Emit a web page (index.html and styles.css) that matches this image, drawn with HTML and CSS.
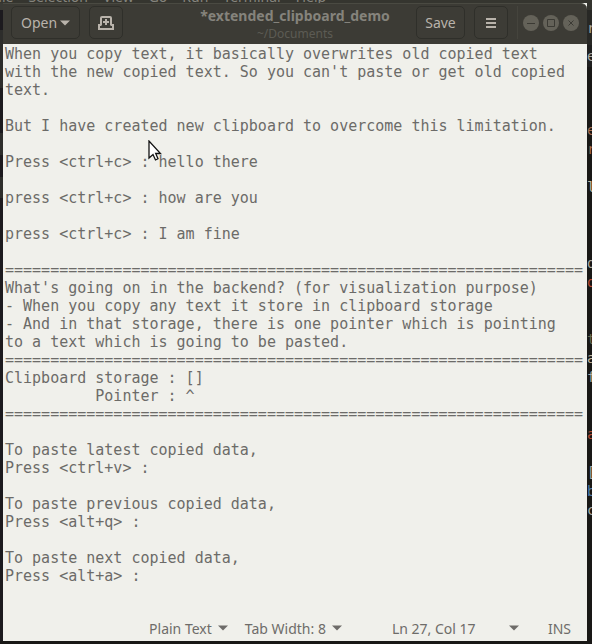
FILE: index.html
```html
<!DOCTYPE html>
<html lang="en">
<head>
<meta charset="utf-8">
<meta name="viewport" content="width=device-width, initial-scale=1">
<title>*extended_clipboard_demo</title>
<link rel="stylesheet" href="styles.css">
</head>
<body>
<div class="desktop">
  <div class="menu-strip">
    <div class="menu-items"><span>File</span><span>Selection</span><span>View</span><span>Go</span><span>Run</span><span>Terminal</span><span>Help</span></div>
  </div>
  <div class="left-strip"></div>
  <main class="window">
    <header class="titlebar">
      <div class="tools">
        <button class="btn open" type="button">Open
          <svg width="10" height="6" viewBox="0 0 10 6" aria-hidden="true"><path d="M0 0.5h10L5 5.5z" fill="currentColor"/></svg>
        </button>
        <button class="btn square" type="button" aria-label="New document">
          <svg width="16" height="14" viewBox="0 0 16 14" aria-hidden="true"><path d="M3 9V2Q3 1 4 1H12Q13 1 13 2V9M3.500 9H1V13H15V9H12.500M8 3V9M5 6H11" fill="none" stroke="currentColor" stroke-width="2"/></svg>
        </button>
      </div>
      <div class="heading">
        <h1>*extended_clipboard_demo</h1>
        <p>~/Documents</p>
      </div>
      <div class="tools tools-end">
        <button class="btn save" type="button">Save</button>
        <button class="btn square" type="button" aria-label="Menu">
          <svg width="10" height="10" viewBox="0 0 10 10" aria-hidden="true"><path d="M0 1h10M0 5h10M0 9h10" stroke="currentColor" stroke-width="2"/></svg>
        </button>
        <div class="controls">
          <button class="round" type="button" aria-label="Minimize"><svg width="16" height="16" viewBox="0 0 16 16"><path d="M4 8.500h8"/></svg></button>
          <button class="round" type="button" aria-label="Maximize"><svg width="16" height="16" viewBox="0 0 16 16"><path d="M4.500 4.500h7v7h-7z"/></svg></button>
          <button class="round" type="button" aria-label="Close"><svg width="16" height="16" viewBox="0 0 16 16"><path d="M5.500 5.500l5 5M10.500 5.500l-5 5"/></svg></button>
        </div>
      </div>
    </header>
    <textarea class="editor" aria-label="Document text" spellcheck="false">When you copy text, it basically overwrites old copied text
with the new copied text. So you can't paste or get old copied
text.

But I have created new clipboard to overcome this limitation.

Press &lt;ctrl+c&gt; : hello there

press &lt;ctrl+c&gt; : how are you

press &lt;ctrl+c&gt; : I am fine

================================================================
What's going on in the backend? (for visualization purpose)
- When you copy any text it store in clipboard storage
- And in that storage, there is one pointer which is pointing
to a text which is going to be pasted.
================================================================
Clipboard storage : []
          Pointer : ^
================================================================

To paste latest copied data,
Press &lt;ctrl+v&gt; :

To paste previous copied data,
Press &lt;alt+q&gt; :

To paste next copied data,
Press &lt;alt+a&gt; :</textarea>
    <footer class="statusbar">
      <button class="status" type="button">Plain Text <svg width="10" height="6" viewBox="0 0 10 6" aria-hidden="true"><path d="M0 0.500h10L5 5.500z" fill="currentColor"/></svg></button>
      <button class="status" type="button">Tab Width: 8 <svg width="10" height="6" viewBox="0 0 10 6" aria-hidden="true"><path d="M0 0.500h10L5 5.500z" fill="currentColor"/></svg></button>
      <button class="status position" type="button">Ln 27, Col 17 <svg width="10" height="6" viewBox="0 0 10 6" aria-hidden="true"><path d="M0 0.500h10L5 5.500z" fill="currentColor"/></svg></button>
      <span class="mode">INS</span>
    </footer>
  </main>
  <pre class="right-strip"><span class="tab">r</span><span class="crumb">e</span>


<i class="warm">e</i>
<i class="warm">r</i>

<i class="pale">l</i>



<i>d</i>
<i class="red">d</i>


<i class="olive">t</i>
<i class="pale">a</i>
<i>f</i>


<i class="red">a</i>

<i>[</i>
<i class="blue">b</i>
<i>c</i></pre>
  <svg class="pointer" width="14" height="22" viewBox="0 0 14 22" aria-hidden="true"><path d="M1 1V18L5 14.500L7.500 20L10 18.800L7.700 13.500H12.500Z" fill="#fff" stroke="#111" stroke-width="1.300"/></svg>
</div>
</body>
</html>
```
FILE: styles.css
```css
* { box-sizing: border-box; }

body {
  margin: 0;
  background: #191816;
  font-family: "Noto Sans", sans-serif;
}

.desktop {
  position: relative;
  display: grid;
  grid-template: 3px 1fr 3px / 3px 1fr 5px;
  min-height: 100vh;
}

.menu-strip {
  grid-column: 1 / -1;
  overflow: hidden;
  background: #35352f;
}

.menu-items {
  display: flex;
  gap: 15px;
  margin: -13px 0 0 -9px;
  font-size: 14px;
  line-height: 20px;
  color: #85847d;
}

.left-strip {
  background: linear-gradient(#3a3a35 0 7px, #1c1a1e 7px 27px, #2d2d2b 27px 85px, #1c1a1e 85px 130px, #2d2d2b 130px 152px, #1c1a1e 152px 174px, #2d2d2b 174px 195px, #1c1a1e 195px);
}

.window {
  display: flex;
  flex-direction: column;
  min-width: 0;
  background: #f0f0eb;
}

.titlebar {
  display: grid;
  grid-template-columns: 1fr auto 1fr;
  height: 41px;
  padding: 2px 8px 0;
  border-top: 1px solid #4a4a42;
  border-radius: 0 6px 0 0;
  background: #3c3b35;
}

.tools {
  display: flex;
  gap: 9px;
  height: 33px;
}

.tools-end { justify-content: flex-end; }

button {
  font: inherit;
  padding: 0;
  border: 0;
  background: none;
}

.btn {
  display: flex;
  align-items: center;
  justify-content: center;
  gap: 3px;
  height: 33px;
  border: 1px solid #2f2f2a;
  border-radius: 5px;
  background: #3d3c36;
  color: #b9b3ab;
  font-size: 14px;
}

.open { width: 69px; }
.save { width: 49px; }
.square { width: 34px; }

.heading {
  text-align: center;
  white-space: nowrap;
}

.heading h1 {
  margin: 0;
  color: #85837c;
  font-size: 14px;
  line-height: 19px;
}

.heading p {
  margin: 0;
  color: #5c5b54;
  font-size: 12px;
  line-height: 17px;
}

.controls {
  display: flex;
  align-items: center;
  gap: 4px;
  padding-left: 5px;
  border-left: 1px solid #45443d;
}

.round {
  width: 16px;
  height: 16px;
  border-radius: 50%;
  background: #646259;
}

.round svg {
  display: block;
  fill: none;
  stroke: #3b3a34;
}

.editor {
  flex: 1;
  width: 100%;
  margin: 0;
  padding: 1px 2px;
  border: 0;
  outline: 0;
  resize: none;
  overflow: hidden;
  background: transparent;
  color: #6c6b68;
  font: 15px/18px "DejaVu Sans Mono", monospace;
  white-space: pre;
}

.statusbar {
  display: flex;
  align-items: center;
  justify-content: flex-end;
  gap: 17px;
  height: 26px;
  padding-right: 16px;
  color: #6e6c69;
  font-size: 14px;
}

.status {
  display: flex;
  align-items: center;
  gap: 6px;
  color: inherit;
  white-space: nowrap;
}

.position {
  justify-content: space-between;
  width: 127px;
  margin-left: 33px;
}

.mode { margin-left: 12px; }

.right-strip {
  margin: 0;
  overflow: hidden;
  background: linear-gradient(#34342f 0 7px, #282825 7px 42px, #202020 42px 64px, #191816 64px);
  color: #aaa9a2;
  font: 14px/19px "DejaVu Sans Mono", monospace;
}

.right-strip i { font-style: normal; }
.tab, .crumb { display: block; }
.tab { padding: 16px 0 9px; }
.crumb { height: 17px; }
.warm { color: #a56d50; }
.red { color: #b94a32; }
.pale { color: #c4b9a0; }
.olive { color: #68684d; }
.blue { color: #527da9; }

/* Mouse pointer floating over the document */
.pointer {
  position: absolute;
  left: 148px;
  top: 140px;
}
```
